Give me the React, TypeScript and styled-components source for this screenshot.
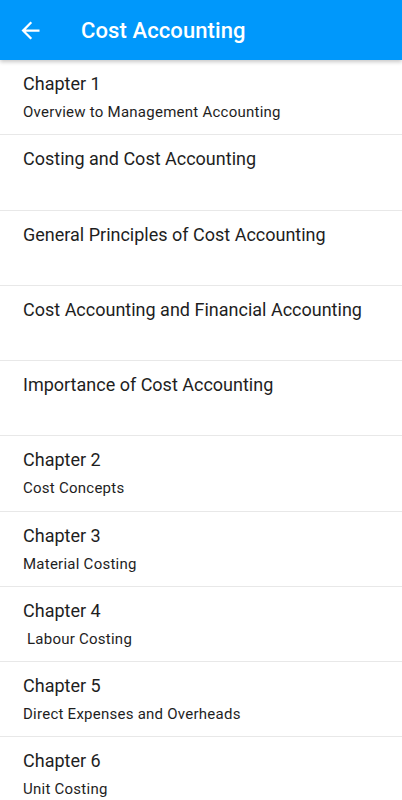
import React from 'react';
import styled, { createGlobalStyle } from 'styled-components';

const GlobalStyle = createGlobalStyle`
    body {
        margin: 0;
        background: #FFFFFF;
        font-family: Roboto, "Noto Sans", sans-serif;
    }
`;

const Page = styled.div`
    width: 402px;
    height: 800px;
    overflow: hidden;
    background-color: #FFFFFF;
`;

const AppBar = styled.div`
    position: relative;
    z-index: 1;
    height: 60px;
    display: flex;
    align-items: center;
    background-color: #0098FB;
    box-shadow: 0 2px 4px rgba(0, 0, 0, 0.22);
`;

const BackButton = styled.div`
    width: 64px;
    padding-left: 17px;
    box-sizing: border-box;
    display: flex;
    align-items: center;
`;

const Title = styled.h1`
    margin: 0 0 0 17px;
    font-size: 22px;
    font-weight: 500;
    color: #FFFFFF;
    letter-spacing: 0.1px;
`;

const List = styled.div`
    display: flex;
    flex-direction: column;
`;

const Row = styled.div`
    height: 75.25px;
    flex-shrink: 0;
    box-sizing: border-box;
    padding: 12px 23px 0;
    border-bottom: 1px solid #E8E8E8;
`;

const Heading = styled.div`
    font-size: 18px;
    line-height: 24px;
    color: #1E1E1E;
`;

const Sub = styled.div`
    margin-top: 6px;
    font-size: 15px;
    line-height: 20px;
    letter-spacing: 0.25px;
    color: #1E1E1E;
    white-space: pre;
`;

const items: { heading: string; sub?: string }[] = [
    { heading: 'Chapter 1', sub: 'Overview to Management Accounting' },
    { heading: 'Costing and Cost Accounting' },
    { heading: 'General Principles of Cost Accounting' },
    { heading: 'Cost Accounting and Financial Accounting' },
    { heading: 'Importance of Cost Accounting' },
    { heading: 'Chapter 2', sub: 'Cost Concepts' },
    { heading: 'Chapter 3', sub: 'Material Costing' },
    { heading: 'Chapter 4', sub: ' Labour Costing' },
    { heading: 'Chapter 5', sub: 'Direct Expenses and Overheads' },
    { heading: 'Chapter 6', sub: 'Unit Costing' },
];

const App: React.FC = () => {
    return (
        <Page>
            <GlobalStyle />
            <AppBar>
                <BackButton>
                    <svg width="27" height="27" viewBox="0 0 24 24" fill="#FFFFFF">
                        <path d="M20 11H7.83l5.59-5.59L12 4l-8 8 8 8 1.41-1.41L7.83 13H20v-2z" />
                    </svg>
                </BackButton>
                <Title>Cost Accounting</Title>
            </AppBar>
            <List>
                {items.map((item, i) => (
                    <Row key={i}>
                        <Heading>{item.heading}</Heading>
                        {item.sub && <Sub>{item.sub}</Sub>}
                    </Row>
                ))}
            </List>
        </Page>
    );
};

export default App;
